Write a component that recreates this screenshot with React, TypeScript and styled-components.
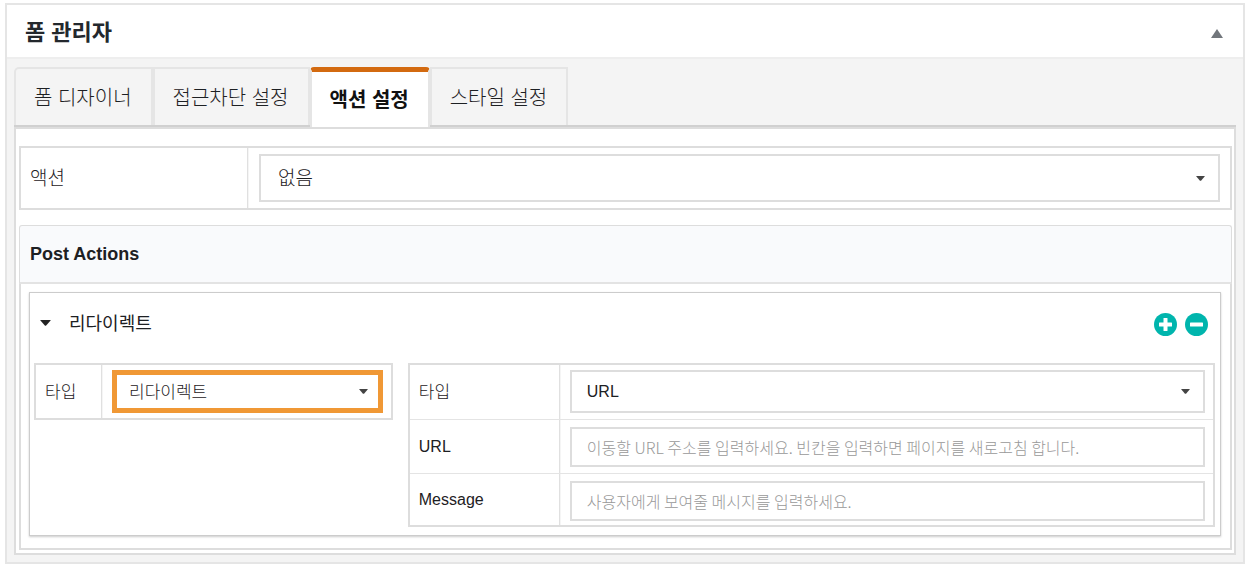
import React, { useState } from 'react';
import styled, { createGlobalStyle, css } from 'styled-components';

const GlobalStyle = createGlobalStyle`
  *, *::before, *::after { box-sizing: border-box; }
  body {
    margin: 0;
    padding: 3px 7px 4px 5px;
    background: #fff;
    color: #1d2023;
    font-family: "Liberation Sans", "Noto Sans CJK KR", sans-serif;
    font-size: 16px;
    line-height: 24px;
  }
  button, input, select { font: inherit; color: inherit; margin: 0; }
`;

const lightFont = css`
  font-weight: 300;
`;

const Box = styled.section`
  border: 2px solid #e5e5e5;
  background: #f4f4f4;
`;

const BoxHeader = styled.header`
  display: flex;
  align-items: center;
  justify-content: space-between;
  height: 54px;
  padding: 4px 20px 0 18px;
  background: #fff;
  border-bottom: 2px solid #eee;
`;

const BoxTitle = styled.h1`
  margin: 0;
  font-size: 22px;
  line-height: 32px;
  font-weight: 700;
  color: #23282d;
`;

const ToggleButton = styled.button`
  display: flex;
  padding: 0;
  border: 0;
  background: none;
  color: #72777c;
  cursor: pointer;
`;

const BoxBody = styled.div`
  padding: 8px 7px 7px;
`;

const TabList = styled.div`
  display: flex;
  height: 60px;
  border-bottom: 2px solid #d0d0d0;
`;

const Tab = styled.button<{ $active: boolean }>`
  height: 58px;
  padding: 2px 19px 0 18px;
  border: 2px solid #e5e5e5;
  border-bottom: 0;
  background: #f4f4f4;
  font-size: 20px;
  line-height: 28px;
  cursor: pointer;
  ${lightFont}

  &:first-child { border-top-left-radius: 5px; }

  ${({ $active }) =>
    $active &&
    css`
      height: 60px;
      padding-top: 0;
      border-top: 5px solid #d36a10;
      border-radius: 4px 4px 0 0;
      background: #fff;
      color: #111;
      font-weight: 700;
    `}
`;

const Panel = styled.div`
  padding: 17px 2px 3px 3px;
  border: 2px solid #ddd;
  background: #fff;
`;

const FormTable = styled.div`
  border: 2px solid #ddd;
  background: #fff;
`;

const FormRow = styled.div<{ $labelWidth: number }>`
  display: grid;
  grid-template-columns: ${({ $labelWidth }) => $labelWidth}px minmax(0, 1fr);

  & + & { border-top: 1px solid #e4e4e4; }
`;

const RowLabel = styled.label<{ $large?: boolean; $latin?: boolean }>`
  display: flex;
  align-items: center;
  padding: ${({ $latin }) => ($latin ? 1 : 2)}px 0 0 9px;
  border-right: 1px solid #e0e0e0;
  box-shadow: 1px 0 #f5f5f5;
  font-size: ${({ $large, $latin }) => ($large ? 19 : $latin ? 16 : 17)}px;
  ${lightFont}
`;

const controlPadding = {
  large: '6px 10px 6px 11px',
  select: '5px 8px 5px 10px',
  input: '7px 8px 4px 10px',
};

const ControlCell = styled.div<{ $kind: keyof typeof controlPadding }>`
  padding: ${({ $kind }) => controlPadding[$kind]};

  ${FormRow}:not(:last-child) > & { padding-bottom: 6px; }
`;

const SelectWrap = styled.div`
  display: grid;
  align-items: center;

  & > * { grid-area: 1 / 1; }
  & > svg { justify-self: end; margin-right: 15px; pointer-events: none; }
`;

const SelectBox = styled.select<{ $large?: boolean; $highlight?: boolean; $latin?: boolean }>`
  appearance: none;
  width: 100%;
  height: ${({ $large }) => ($large ? 48 : 43)}px;
  padding: ${({ $latin }) => ($latin ? 0 : 2)}px 32px 0
    ${({ $large, $highlight }) => ($large ? 17 : $highlight ? 12 : 15)}px;
  border: ${({ $highlight }) => ($highlight ? '5px solid #f09835' : '2px solid #ddd')};
  border-radius: 0;
  background: #fff;
  font-size: ${({ $large, $latin }) => ($large ? 19 : $latin ? 16 : 17)}px;
  ${lightFont}
`;

const TextInput = styled.input`
  display: block;
  width: 100%;
  height: 40px;
  padding: 0 15px;
  border: 2px solid #ddd;
  border-radius: 0;
  background: #fff;
  font-family: "Noto Sans CJK KR", sans-serif;
  ${lightFont}

  &::placeholder { color: #999; opacity: 1; }
`;

const PostActions = styled.section`
  margin-top: 15px;
`;

const PostHeader = styled.h2`
  display: flex;
  align-items: center;
  height: 59px;
  margin: 0;
  padding-left: 10px;
  border: 1px solid #ddd;
  border-bottom: 2px solid #e3e3e3;
  border-radius: 3px 3px 0 0;
  background: #f9fafc;
  font-size: 18px;
  font-weight: 700;
`;

const PostBody = styled.div`
  padding: 8px 9px 12px 8px;
  border: 2px solid #ddd;
  border-top: 0;
`;

const Card = styled.article`
  padding: 0 5px 8px 4px;
  border: 1px solid #ccc;
  box-shadow: 0 1px 2px #ccc;
`;

const CardHeader = styled.header`
  display: flex;
  align-items: center;
  justify-content: space-between;
  height: 62px;
  margin-bottom: 8px;
  padding: 0 7px 0 6px;
`;

const CardToggle = styled.button`
  display: flex;
  align-items: center;
  gap: 18px;
  padding: 0;
  border: 0;
  background: none;
  font-size: 18px;
  font-weight: 400;
  cursor: pointer;

  & > svg { margin-bottom: 3px; }
`;

const CardTools = styled.div`
  display: flex;
  gap: 8px;
`;

const RoundButton = styled.button`
  display: flex;
  padding: 0;
  border: 0;
  background: none;
  cursor: pointer;
`;

const CardColumns = styled.div`
  display: grid;
  grid-template-columns: 4fr 9fr;
  align-items: start;
  gap: 15px;
`;

const Caret = ({ width = 9, height = 5, up = false, color = '#444' }) => (
  <svg width={width} height={height} viewBox="0 0 10 6" preserveAspectRatio="none" aria-hidden="true">
    <path d={up ? 'M5 0L10 6H0Z' : 'M0.6 0H9.4Q10 0 9.6 0.6L5.6 5.6Q5 6 4.4 5.6L0.4 0.6Q0 0 0.6 0Z'} fill={color} />
  </svg>
);

const CircleSign = ({ plus = false }) => (
  <svg width="23" height="23" viewBox="0 0 23 23" aria-hidden="true">
    <circle cx="11.5" cy="11.5" r="11.5" fill="#00b5ad" />
    <rect x="5" y="9.5" width="13" height="4" rx="0.6" fill="#fff" />
    {plus && <rect x="9.5" y="5" width="4" height="13" rx="0.6" fill="#fff" />}
  </svg>
);

const tabs = ['폼 디자이너', '접근차단 설정', '액션 설정', '스타일 설정'];

export default function App() {
  const [active, setActive] = useState(2);

  return (
    <>
      <GlobalStyle />
      <Box>
        <BoxHeader>
          <BoxTitle>폼 관리자</BoxTitle>
          <ToggleButton type="button" aria-label="접기" aria-expanded="true">
            <Caret up width={12} height={9} color="#72777c" />
          </ToggleButton>
        </BoxHeader>
        <BoxBody>
          <TabList role="tablist">
            {tabs.map((name, i) => (
              <Tab
                key={name}
                type="button"
                role="tab"
                aria-selected={i === active}
                $active={i === active}
                onClick={() => setActive(i)}
              >
                {name}
              </Tab>
            ))}
          </TabList>
          <Panel role="tabpanel">
            <FormTable>
              <FormRow $labelWidth={227}>
                <RowLabel htmlFor="action" $large>액션</RowLabel>
                <ControlCell $kind="large">
                  <SelectWrap>
                    <SelectBox id="action" $large>
                      <option>없음</option>
                    </SelectBox>
                    <Caret />
                  </SelectWrap>
                </ControlCell>
              </FormRow>
            </FormTable>

            <PostActions>
              <PostHeader>Post Actions</PostHeader>
              <PostBody>
                <Card>
                  <CardHeader>
                    <CardToggle type="button" aria-expanded="true">
                      <Caret width={11} height={6} color="#222" />
                      리다이렉트
                    </CardToggle>
                    <CardTools>
                      <RoundButton type="button" aria-label="추가"><CircleSign plus /></RoundButton>
                      <RoundButton type="button" aria-label="삭제"><CircleSign /></RoundButton>
                    </CardTools>
                  </CardHeader>
                  <CardColumns>
                    <FormTable>
                      <FormRow $labelWidth={66}>
                        <RowLabel htmlFor="post-type">타입</RowLabel>
                        <ControlCell $kind="select">
                          <SelectWrap>
                            <SelectBox id="post-type" $highlight>
                              <option>리다이렉트</option>
                            </SelectBox>
                            <Caret />
                          </SelectWrap>
                        </ControlCell>
                      </FormRow>
                    </FormTable>
                    <FormTable>
                      <FormRow $labelWidth={150}>
                        <RowLabel htmlFor="redirect-type">타입</RowLabel>
                        <ControlCell $kind="select">
                          <SelectWrap>
                            <SelectBox id="redirect-type" $latin>
                              <option>URL</option>
                            </SelectBox>
                            <Caret />
                          </SelectWrap>
                        </ControlCell>
                      </FormRow>
                      <FormRow $labelWidth={150}>
                        <RowLabel htmlFor="redirect-url" $latin>URL</RowLabel>
                        <ControlCell $kind="input">
                          <TextInput
                            id="redirect-url"
                            placeholder="이동할 URL 주소를 입력하세요. 빈칸을 입력하면 페이지를 새로고침 합니다."
                          />
                        </ControlCell>
                      </FormRow>
                      <FormRow $labelWidth={150}>
                        <RowLabel htmlFor="redirect-message" $latin>Message</RowLabel>
                        <ControlCell $kind="input">
                          <TextInput id="redirect-message" placeholder="사용자에게 보여줄 메시지를 입력하세요." />
                        </ControlCell>
                      </FormRow>
                    </FormTable>
                  </CardColumns>
                </Card>
              </PostBody>
            </PostActions>
          </Panel>
        </BoxBody>
      </Box>
    </>
  );
}
